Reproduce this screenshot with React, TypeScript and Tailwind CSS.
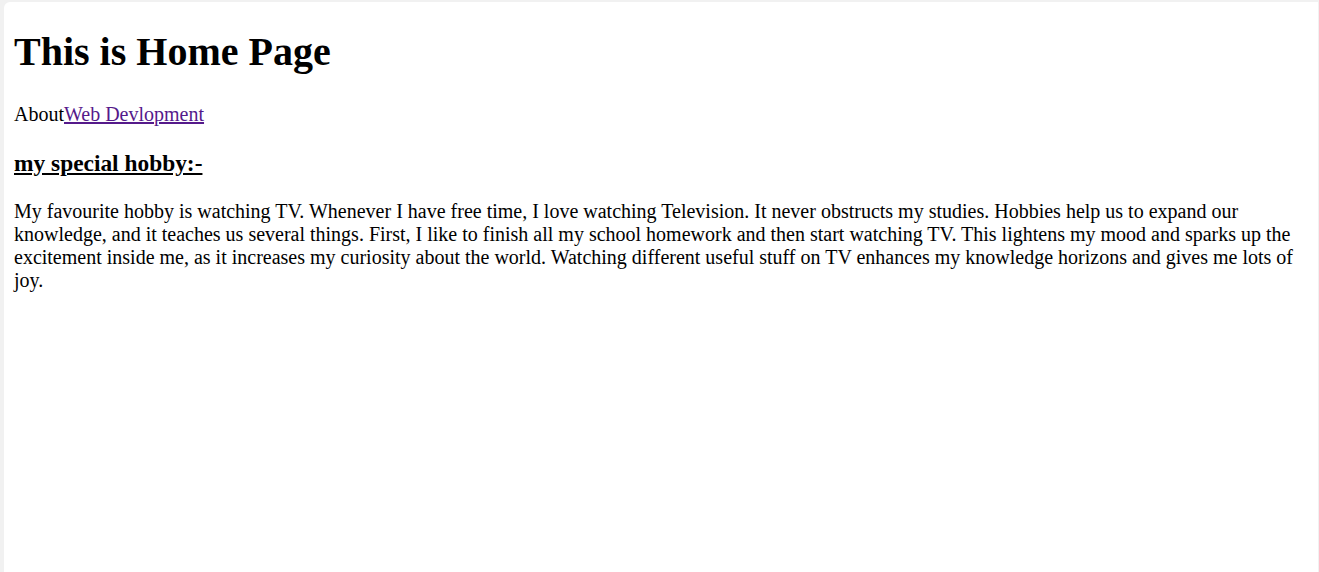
export default function App() {
  return (
    <div className="min-h-[572px] bg-[#f1f1f1] pl-[4px] pt-[2px] pr-[1px] flex">
      <div className="flex-1 bg-white rounded-tl-[6px] px-[10px] pt-[27px] pb-[10px] text-black font-['Liberation_Serif',serif] text-[20px] leading-[23px]">
        <h1 className="text-[40px] leading-[46px] font-bold">This is Home Page</h1>
        <div className="mt-[28px]">
          <span>About</span>
          <a href="#" className="text-[#551a8b] underline">
            Web Devlopment
          </a>
        </div>
        <h3 className="mt-[24px] text-[23.4px] leading-[27px] font-bold underline">my special hobby:-</h3>
        <p className="mt-[23px]">
          My favourite hobby is watching TV. Whenever I have free time, I love watching Television. It never obstructs my
          studies. Hobbies help us to expand our knowledge, and it teaches us several things. First, I like to finish all my
          school homework and then start watching TV. This lightens my mood and sparks up the excitement inside me, as it
          increases my curiosity about the world. Watching different useful stuff on TV enhances my knowledge horizons and
          gives me lots of joy.
        </p>
      </div>
    </div>
  );
}
